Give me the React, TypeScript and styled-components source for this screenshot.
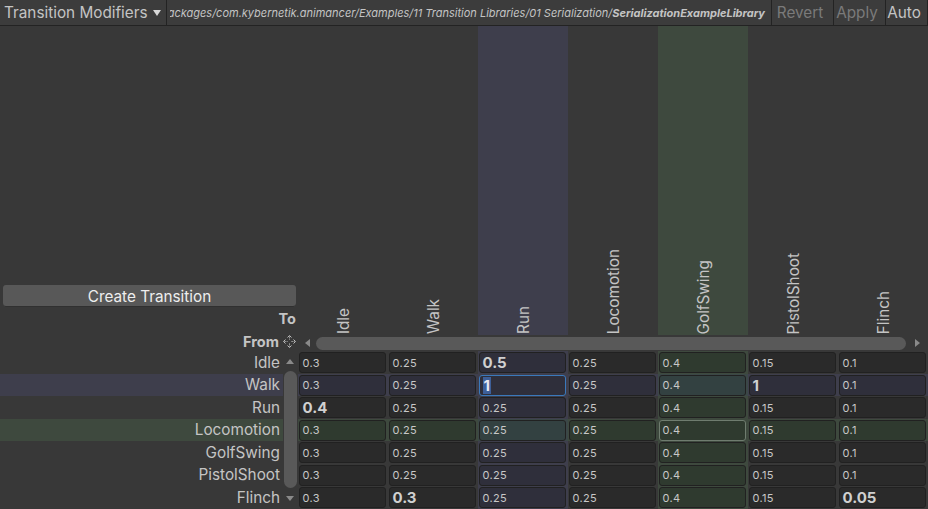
import React from 'react';
import styled, { createGlobalStyle } from 'styled-components';

const Global = createGlobalStyle`
  html, body { margin: 0; padding: 0; background: #383838; }
  body { font-family: Inter, "Noto Sans", sans-serif; color: #c4c4c4; }
  #root { width: 928px; height: 509px; overflow: hidden; }
`;

type Tone = 'none' | 'blue' | 'green' | 'teal';

const bandBg: Record<Tone, string> = {
  none: 'transparent',
  blue: '#3e3e4c',
  green: '#3e493e',
  teal: '#3b4747',
};
const fieldBg: Record<Tone, string> = {
  none: '#2a2a2a',
  blue: '#2f2f3b',
  green: '#2f3a2f',
  teal: '#334141',
};

const LABEL = '15.3px';

const Window = styled.div`
  width: 928px;
  height: 509px;
  display: flex;
  flex-direction: column;
  background: #383838;
  overflow: hidden;
`;

const Toolbar = styled.div`
  height: 25px;
  flex: none;
  display: flex;
  align-items: stretch;
  background: #3c3c3c;
  border-bottom: 1px solid #232323;
`;

const Dropdown = styled.div`
  width: 167px;
  flex: none;
  box-sizing: border-box;
  display: flex;
  align-items: center;
  gap: 5px;
  padding-left: 4px;
  font-size: ${LABEL};
  color: #c4c4c4;
  border-right: 1px solid #232323;
`;

const Caret = styled.span`
  width: 0;
  height: 0;
  border-left: 4.5px solid transparent;
  border-right: 4.5px solid transparent;
  border-top: 6px solid #d8d8d8;
  margin-top: 1px;
`;

const PathBox = styled.div`
  flex: 1;
  min-width: 0;
  margin-left: 3px;
  display: flex;
  justify-content: flex-end;
  align-items: center;
  overflow: hidden;
  white-space: nowrap;
  font-size: 11px;
  font-style: italic;
  color: #c4c4c4;
  padding-right: 6px;
`;

const PathBold = styled.span`
  font-weight: 700;
`;

const ToolButton = styled.div<{ $w: number; $disabled?: boolean }>`
  width: ${p => p.$w}px;
  flex: none;
  box-sizing: border-box;
  display: flex;
  align-items: center;
  justify-content: center;
  padding-right: 5px;
  border-left: 1px solid #232323;
  font-size: ${LABEL};
  color: ${p => (p.$disabled ? '#7a7a7a' : '#c4c4c4')};
`;

const LastButton = styled(ToolButton)`
  border-right: 1px solid #232323;
`;

const Main = styled.div`
  flex: 1;
  display: grid;
  grid-template-columns: 298px 630px;
  grid-template-rows: 309px 16px 1fr;
  min-height: 0;
`;

const LeftHeader = styled.div`
  display: flex;
  flex-direction: column;
  justify-content: flex-end;
  padding: 0 2px 6px 3px;
`;

const CreateButton = styled.div`
  height: 22px;
  border-radius: 3px;
  background: #585858;
  box-shadow: inset 0 -1px 0 #303030;
  display: flex;
  align-items: center;
  justify-content: center;
  font-size: ${LABEL};
  color: #eeeeee;
`;

const AxisLabel = styled.div`
  height: 22px;
  display: flex;
  align-items: center;
  justify-content: flex-end;
  font-weight: 700;
  font-size: 14.5px;
  color: #c4c4c4;
`;

const HeaderStrip = styled.div`
  display: grid;
  grid-template-columns: repeat(7, 90px);
`;

const ColHeader = styled.div<{ $tone: Tone }>`
  background: ${p => bandBg[p.$tone]};
  display: flex;
  align-items: flex-end;
  justify-content: center;
  padding-bottom: 1px;
`;

const VerticalText = styled.span`
  writing-mode: vertical-rl;
  transform: rotate(180deg);
  font-size: ${LABEL};
  color: #c4c4c4;
  white-space: nowrap;
`;

const FromCell = styled.div`
  display: flex;
  align-items: center;
  justify-content: flex-end;
  gap: 3px;
  padding-right: 1px;
  padding-bottom: 3px;
`;

const FromLabel = styled.span`
  font-weight: 700;
  font-size: 14.5px;
  color: #c4c4c4;
`;

const HScroll = styled.div`
  display: flex;
  align-items: center;
  background: #383838;
`;

const ArrowBox = styled.div<{ $w: number }>`
  width: ${p => p.$w}px;
  flex: none;
  display: flex;
  align-items: center;
  justify-content: center;
`;

const Tri = styled.span<{ $dir: 'left' | 'right' | 'up' | 'down' }>`
  width: 0;
  height: 0;
  ${p =>
    p.$dir === 'left'
      ? 'border-top: 4px solid transparent; border-bottom: 4px solid transparent; border-right: 5px solid #8a8a8a;'
      : p.$dir === 'right'
      ? 'border-top: 4px solid transparent; border-bottom: 4px solid transparent; border-left: 5px solid #8a8a8a;'
      : p.$dir === 'up'
      ? 'border-left: 4.5px solid transparent; border-right: 4.5px solid transparent; border-bottom: 5px solid #8a8a8a;'
      : 'border-left: 4.5px solid transparent; border-right: 4.5px solid transparent; border-top: 5px solid #8a8a8a;'}
`;

const HThumb = styled.div`
  flex: 1;
  height: 13px;
  border-radius: 7px;
  background: #595959;
`;

const LeftBody = styled.div`
  display: grid;
  grid-template-columns: 283px 15px;
`;

const Labels = styled.div`
  display: grid;
  grid-auto-rows: 22.5px;
`;

const RowLabel = styled.div<{ $tone: Tone }>`
  background: ${p => bandBg[p.$tone]};
  display: flex;
  align-items: center;
  justify-content: flex-end;
  padding-right: 3px;
  font-size: ${LABEL};
  color: #c4c4c4;
`;

const VScroll = styled.div`
  display: flex;
  flex-direction: column;
  align-items: center;
  padding-right: 1px;
`;

const VArrow = styled.div<{ $h: number }>`
  height: ${p => p.$h}px;
  flex: none;
  display: flex;
  align-items: center;
  justify-content: center;
`;

const VThumb = styled.div`
  flex: 1;
  width: 13px;
  border-radius: 7px;
  background: #595959;
`;

const Cells = styled.div`
  display: grid;
  grid-template-columns: repeat(7, 90px);
  grid-auto-rows: 22.5px;
`;

const CellWrap = styled.div<{ $tone: Tone }>`
  background: ${p => bandBg[p.$tone]};
  padding: 1px 2px 0.5px 0.5px;
  display: flex;
`;

const Field = styled.div<{ $tone: Tone; $state?: 'focus' | 'hover' }>`
  flex: 1;
  box-sizing: border-box;
  border-radius: 3px;
  background: ${p => fieldBg[p.$tone]};
  border: 1px solid
    ${p => (p.$state === 'focus' ? '#3a79bb' : p.$state === 'hover' ? '#6f7c6f' : '#212121')};
  display: flex;
  align-items: center;
  padding-left: 3px;
  overflow: hidden;
`;

const Value = styled.span<{ $bold?: boolean }>`
  font-size: ${p => (p.$bold ? '15px' : '11px')};
  font-weight: ${p => (p.$bold ? 700 : 400)};
  color: ${p => (p.$bold ? '#d0d0d0' : '#c8c8c8')};
  letter-spacing: ${p => (p.$bold ? '0' : '0.3px')};
`;

const Selected = styled.span`
  font-size: 15px;
  font-weight: 700;
  color: #e8e8f0;
  background: #3d5f99;
  padding: 0 1px;
  line-height: 17px;
`;

const MoveIcon = () => (
  <svg width="15" height="15" viewBox="0 0 15 15" fill="none" stroke="#bdbdbd" strokeWidth="1">
    <path d="M7.5 2.5v3M7.5 9.5v3M2.5 7.5h3M9.5 7.5h3" strokeDasharray="1.2 1" />
    <path d="M5.5 3.5l2-2 2 2M5.5 11.5l2 2 2-2M3.5 5.5l-2 2 2 2M11.5 5.5l2 2-2 2" />
  </svg>
);

const cols = ['Idle', 'Walk', 'Run', 'Locomotion', 'GolfSwing', 'PistolShoot', 'Flinch'];

type Cell = string | { v: string; bold?: boolean; focus?: boolean };

const rows: { name: string; cells: Cell[] }[] = [
  { name: 'Idle', cells: ['0.3', '0.25', { v: '0.5', bold: true }, '0.25', '0.4', '0.15', '0.1'] },
  { name: 'Walk', cells: ['0.3', '0.25', { v: '1', focus: true }, '0.25', '0.4', { v: '1', bold: true }, '0.1'] },
  { name: 'Run', cells: [{ v: '0.4', bold: true }, '0.25', '0.25', '0.25', '0.4', '0.15', '0.1'] },
  { name: 'Locomotion', cells: ['0.3', '0.25', '0.25', '0.25', '0.4', '0.15', '0.1'] },
  { name: 'GolfSwing', cells: ['0.3', '0.25', '0.25', '0.25', '0.4', '0.15', '0.1'] },
  { name: 'PistolShoot', cells: ['0.3', '0.25', '0.25', '0.25', '0.4', '0.15', '0.1'] },
  { name: 'Flinch', cells: ['0.3', { v: '0.3', bold: true }, '0.25', '0.25', '0.4', '0.15', { v: '0.05', bold: true }] },
];

const rowTone = (r: number): Tone => (r === 1 ? 'blue' : r === 3 ? 'green' : 'none');
const colTone = (c: number): Tone => (c === 2 ? 'blue' : c === 4 ? 'green' : 'none');
const mix = (a: Tone, b: Tone): Tone => {
  if (a === 'none') return b;
  if (b === 'none') return a;
  if (a === b) return a;
  return 'teal';
};

export default function App() {
  return (
    <>
      <Global />
      <Window>
        <Toolbar>
          <Dropdown>
            <span>Transition Modifiers</span>
            <Caret />
          </Dropdown>
          <PathBox>
            <span>
              Packages/com.kybernetik.animancer/Examples/11 Transition Libraries/01 Serialization/
              <PathBold>SerializationExampleLibrary</PathBold>
            </span>
          </PathBox>
          <ToolButton $w={62} $disabled>Revert</ToolButton>
          <ToolButton $w={52} $disabled>Apply</ToolButton>
          <LastButton $w={43}>Auto</LastButton>
        </Toolbar>
        <Main>
          <LeftHeader>
            <CreateButton>Create Transition</CreateButton>
            <AxisLabel>To</AxisLabel>
          </LeftHeader>
          <HeaderStrip>
            {cols.map((c, i) => (
              <ColHeader key={c} $tone={colTone(i)}>
                <VerticalText>{c}</VerticalText>
              </ColHeader>
            ))}
          </HeaderStrip>
          <FromCell>
            <FromLabel>From</FromLabel>
            <MoveIcon />
          </FromCell>
          <HScroll>
            <ArrowBox $w={18}>
              <Tri $dir="left" />
            </ArrowBox>
            <HThumb />
            <ArrowBox $w={22}>
              <Tri $dir="right" />
            </ArrowBox>
          </HScroll>
          <LeftBody>
            <Labels>
              {rows.map((r, i) => (
                <RowLabel key={r.name} $tone={rowTone(i)}>
                  {r.name}
                </RowLabel>
              ))}
            </Labels>
            <VScroll>
              <VArrow $h={20}>
                <Tri $dir="up" />
              </VArrow>
              <VThumb />
              <VArrow $h={21}>
                <Tri $dir="down" />
              </VArrow>
            </VScroll>
          </LeftBody>
          <Cells>
            {rows.map((r, ri) =>
              r.cells.map((cell, ci) => {
                const tone = mix(rowTone(ri), colTone(ci));
                const c = typeof cell === 'string' ? { v: cell } : cell;
                const state = c.focus ? 'focus' : ri === 3 && ci === 4 ? 'hover' : undefined;
                return (
                  <CellWrap key={`${ri}-${ci}`} $tone={tone}>
                    <Field $tone={tone} $state={state}>
                      {c.focus ? <Selected>{c.v}</Selected> : <Value $bold={c.bold}>{c.v}</Value>}
                    </Field>
                  </CellWrap>
                );
              })
            )}
          </Cells>
        </Main>
      </Window>
    </>
  );
}
